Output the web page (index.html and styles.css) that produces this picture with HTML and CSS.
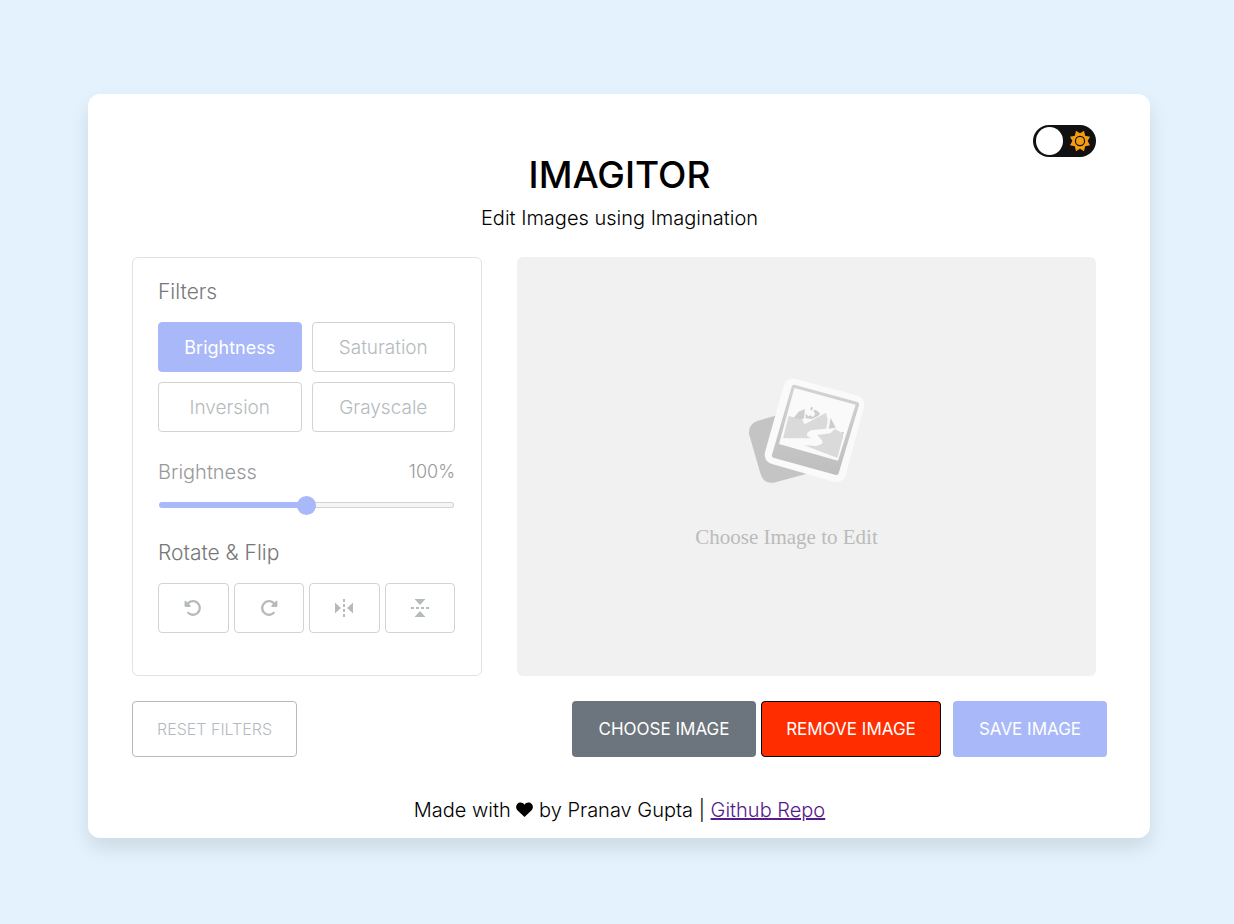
FILE: index.html
```html
<!DOCTYPE html>
<html lang="en">
<head>
<meta charset="utf-8">
<meta name="viewport" content="width=device-width, initial-scale=1">
<title>Imagitor</title>
<link rel="stylesheet" href="styles.css">
</head>
<body>
<main class="card">
  <div class="top">
    <label class="toggle">
      <input class="knob" type="checkbox" aria-label="Dark mode">
      <svg class="sun" viewBox="0 0 24 24" aria-hidden="true">
        <path fill="#f39c12" d="M12 3.6 16.4.9 17.6 6.2 23 7.4 20.300 12 23 16.600 17.600 17.800 16.400 23.100 12 20.400 7.600 23.100 6.400 17.800 1 16.600 3.700 12 1 7.400 6.400 6.200 7.600.9Z"/>
        <circle cx="12" cy="12" r="5" fill="none" stroke="#111" stroke-width="1.300"/>
      </svg>
    </label>
  </div>
  <header class="heading">
    <h1 class="title">IMAGITOR</h1>
    <p class="tagline">Edit Images using Imagination</p>
  </header>
  <div class="workspace">
    <section class="panel">
      <h2 class="label">Filters</h2>
      <div class="filters">
        <button class="option active" type="button">Brightness</button>
        <button class="option" type="button">Saturation</button>
        <button class="option" type="button">Inversion</button>
        <button class="option" type="button">Grayscale</button>
      </div>
      <div class="range-info"><label class="range-name" for="amount">Brightness</label><output for="amount">100%</output></div>
      <input class="range" id="amount" type="range" min="0" max="200" value="100">
      <h2 class="label">Rotate &amp; Flip</h2>
      <div class="rotate">
        <button class="option" type="button" aria-label="Rotate left"><svg class="icon" viewBox="0 0 512 512"><path d="M48.500 224H40c-13.300 0-24-10.700-24-24V72c0-9.700 5.800-18.500 14.800-22.200s19.300-1.700 26.200 5.200L98.600 96.600c87.600-86.500 228.700-86.200 315.800 1c87.500 87.500 87.500 229.300 0 316.800s-229.300 87.500-316.800 0c-12.500-12.500-12.500-32.800 0-45.300s32.800-12.500 45.300 0c62.500 62.500 163.800 62.500 226.300 0s62.500-163.800 0-226.300c-62.200-62.200-162.700-62.500-225.300-1L185 183c6.900 6.900 8.900 17.200 5.200 26.200s-12.500 14.800-22.200 14.800z"/></svg></button>
        <button class="option" type="button" aria-label="Rotate right"><svg class="icon" viewBox="0 0 512 512"><path transform="matrix(-1 0 0 1 512 0)" d="M48.500 224H40c-13.300 0-24-10.700-24-24V72c0-9.700 5.800-18.500 14.800-22.200s19.300-1.700 26.200 5.200L98.600 96.600c87.600-86.500 228.700-86.200 315.800 1c87.500 87.500 87.500 229.300 0 316.800s-229.300 87.500-316.800 0c-12.500-12.500-12.500-32.800 0-45.300s32.800-12.500 45.300 0c62.500 62.500 163.800 62.500 226.300 0s62.500-163.800 0-226.300c-62.200-62.200-162.700-62.500-225.300-1L185 183c6.900 6.900 8.900 17.200 5.200 26.200s-12.500 14.800-22.200 14.800z"/></svg></button>
        <button class="option" type="button" aria-label="Flip horizontally"><svg class="icon" viewBox="0 0 18 18"><path d="M0 3.500 6 9 0 14.500ZM18 3.500 12 9 18 14.500ZM8 0h2v3H8ZM8 5h2v3H8ZM8 10h2v3H8ZM8 15h2v3H8Z"/></svg></button>
        <button class="option" type="button" aria-label="Flip vertically"><svg class="icon" viewBox="0 0 18 18"><path d="M3.500 0 9 6 14.500 0ZM3.500 18 9 12 14.500 18ZM0 8v2h3V8ZM5 8v2h3V8ZM10 8v2h3V8ZM15 8v2h3V8Z"/></svg></button>
      </div>
    </section>
    <section class="preview">
      <svg class="photos" viewBox="36 36 351 321" aria-hidden="true">
        <defs><linearGradient id="frame" x1="0" y1="0" x2="0" y2="1"><stop offset="0" stop-color="#d3d3d3"/><stop offset="1" stop-color="#bebebe"/></linearGradient></defs>
        <path fill="#c4c4c4" d="M118 152 66 167Q36 177 39 207L73 325Q82 357 113 353L210 327Z"/>
        <path fill="#fafafa" d="M178 41 362 91Q390 100 384 126L330 328Q321 356 294 350L108 297Q82 288 87 262L143 62Q152 38 178 41Z"/>
        <path fill="url(#frame)" d="M175 59 364 111Q371 114 369 120L308 325Q306 331 300 330L112 278Q106 275 108 269L167 65Q169 58 175 59Z"/>
        <path fill="#fafafa" d="M175 69 359 119 306 287 129 237Z"/>
        <path fill="#dadada" d="M158 153 198 163 206 178 270 143 275 165 271 191 228 195Q208 202 214 213L226 220 141 220ZM283 205 297 192 313 201 322 212 304 279 205 241 240 243Q266 239 258 226L244 210Z"/>
        <path fill="#cecece" d="M173 159 188 140 207 132 204 161 192 163ZM209 160 209 146 218 154 224 151 230 157 238 148 232 137 239 134 252 145 248 152 228 162ZM225 125 231 128 228 137 223 134ZM284 158 299 188 278 191ZM315 200 324 202 320 211Z"/>
      </svg>
      <p class="hint">Choose Image to Edit</p>
    </section>
  </div>
  <div class="actions">
    <button class="action reset" type="button">RESET FILTERS</button>
    <button class="action choose" type="button">CHOOSE IMAGE</button>
    <button class="action remove" type="button">REMOVE IMAGE</button>
    <button class="action save" type="button">SAVE IMAGE</button>
  </div>
  <footer class="footer">Made with <svg class="heart" viewBox="0 0 18 16" role="img" aria-label="love"><path d="M9 3C7.500 0 3.500-.2 1.500 1.800-.6 4-.3 7 1.700 9L9 16 16.300 9C18.300 7 18.600 4 16.500 1.800 14.500-.2 10.500 0 9 3Z"/></svg> by Pranav Gupta | <a class="link" href="#">Github Repo</a></footer>
</main>
</body>
</html>
```

FILE: styles.css
```css
* { box-sizing: border-box; margin: 0; padding: 0; }
body {
  min-height: 100vh;
  padding: 94px 84px 86px 88px;
  background: #e3f2fd;
  color: #000;
  font-family: "Inter", "Open Sans", sans-serif;
  font-weight: 300;
}
.card {
  padding: 31px 43px 13px 44px;
  background: #fff;
  border-radius: 12px;
  box-shadow: 0 10px 20px rgba(0, 0, 0, 0.1);
}
.top { display: flex; justify-content: flex-end; padding-right: 11px; }
.toggle {
  display: flex;
  align-items: center;
  justify-content: space-between;
  width: 63px;
  height: 32px;
  padding: 0 5px 0 3px;
  background: #111;
  border-radius: 16px;
  cursor: pointer;
}
.knob { appearance: none; width: 27px; height: 28px; border-radius: 50%; background: #fff; }
.sun { width: 22px; height: 22px; }
.heading { text-align: center; }
.title { font-size: 37px; line-height: 36px; font-weight: 500; }
.tagline { margin-top: 12px; font-size: 20px; line-height: 26px; }
.workspace {
  display: grid;
  grid-template-columns: 350px 1fr;
  gap: 35px;
  margin-top: 26px;
  padding-right: 11px;
}
.panel {
  padding: 21px 26px 42px 25px;
  border: 1px solid #e2e2e2;
  border-radius: 6px;
}
.label { font-size: 21px; line-height: 26px; font-weight: 300; color: #777; }
.filters { display: grid; grid-template-columns: 1fr 1fr; gap: 10px; margin-top: 17px; }
.option {
  display: flex;
  align-items: center;
  justify-content: center;
  height: 50px;
  border: 1px solid #d3d3d3;
  border-radius: 4px;
  background: #fff;
  color: #b5babd;
  font: inherit;
  font-size: 19px;
}
.active { background: #a9b8f8; border-color: #a9b8f8; color: #fff; font-size: 18px; font-weight: 400; }
.range-info {
  display: flex;
  justify-content: space-between;
  margin-top: 27px;
  font-size: 18px;
  line-height: 26px;
  color: #999;
}
.range-name { font-size: 20px; }
.range {
  appearance: none;
  display: block;
  width: calc(100% - 2px);
  height: 20px;
  margin: 10px 1px 25px;
  background: transparent;
}
.range::-webkit-slider-runnable-track {
  height: 6px;
  border: 1px solid transparent;
  border-radius: 3px;
  background:
    linear-gradient(90deg, #a9b8f8 50%, transparent 50%) border-box,
    linear-gradient(#f5f5f5, #f5f5f5) padding-box,
    linear-gradient(#d3d3d3, #d3d3d3) border-box;
}
.range::-webkit-slider-thumb {
  appearance: none;
  width: 19px;
  height: 19px;
  margin-top: -7px;
  border-radius: 50%;
  background: #a9b8f8;
}
.rotate { display: grid; grid-template-columns: repeat(4, 1fr); gap: 5px; margin-top: 17px; }
.icon { width: 18px; height: 18px; fill: currentColor; }
.preview {
  display: flex;
  flex-direction: column;
  align-items: center;
  justify-content: center;
  gap: 40px;
  padding-bottom: 6px;
  background: #f1f1f1;
  border-radius: 6px;
}
.photos { width: 117px; height: 107px; }
.hint {
  padding-right: 40px;
  color: #bbb;
  font-family: "Liberation Serif", serif;
  font-size: 21px;
  line-height: 26px;
  font-weight: 400;
}
.actions { display: flex; margin-top: 25px; }
.action {
  height: 56px;
  border: 1px solid transparent;
  border-radius: 4px;
  color: #fff;
  font: inherit;
  font-size: 17px;
  font-weight: 400;
}
.reset { width: 165px; margin-right: auto; background: #fff; border-color: #b5babf; color: #b5babf; font-size: 16px; font-weight: 300; }
.choose { width: 184px; margin-right: 5px; background: #6c757d; }
.remove { width: 180px; margin-right: 12px; background: #ff2d00; border-color: #000; }
.save { width: 154px; background: #a9b8f8; }
.footer { margin-top: 38px; font-size: 20px; line-height: 30px; text-align: center; }
.heart { width: 17px; height: 15px; }
.link { color: #551a8b; }
```
